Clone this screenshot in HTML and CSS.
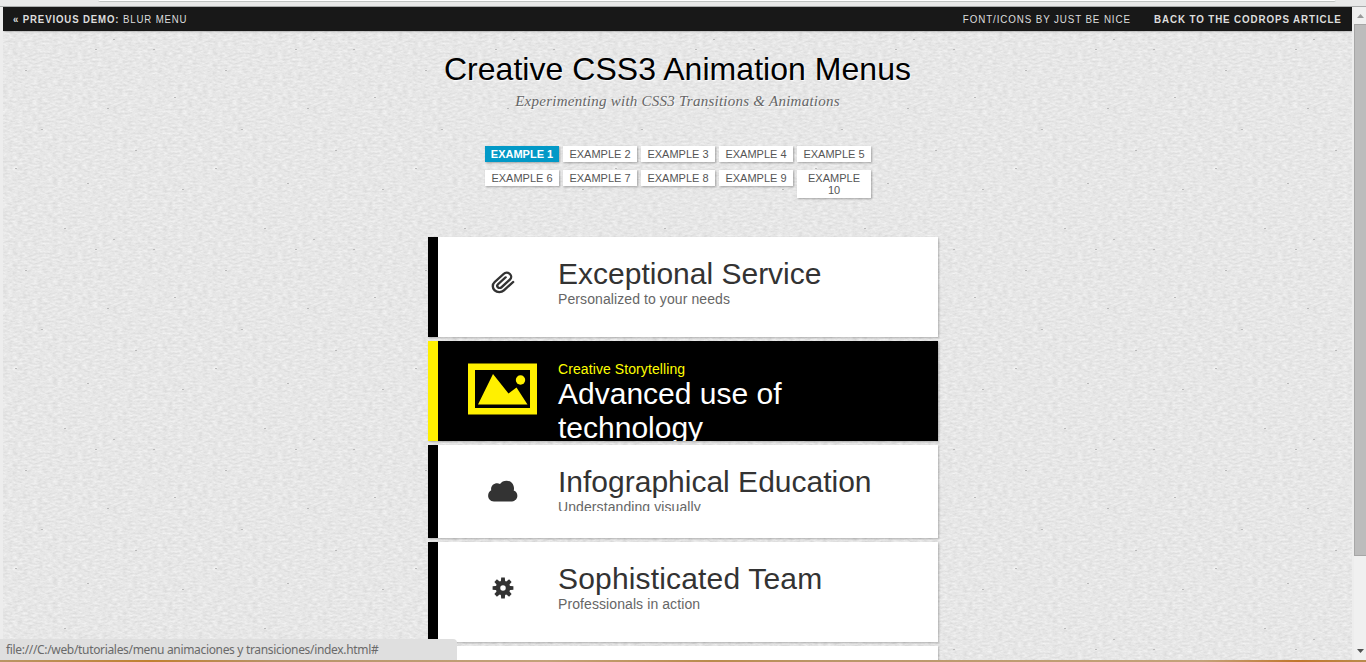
FILE: index.html
```html
<!DOCTYPE html>
<html lang="en">
<head>
<meta charset="utf-8">
<title>Creative CSS3 Animation Menus</title>
<link rel="stylesheet" href="styles.css">
</head>
<body>
<div class="chrome-top"><span class="chrome-field"></span></div>
<div class="window">
  <main class="page">
    <svg class="paper" width="1349" height="653" aria-hidden="true">
      <defs>
        <filter id="grain" x="0" y="0" width="200" height="200" filterUnits="userSpaceOnUse" color-interpolation-filters="sRGB">
          <feTurbulence type="fractalNoise" baseFrequency="0.2 0.5" numOctaves="3" seed="4" stitchTiles="stitch"/>
          <feColorMatrix values="0.14 0 0 0 0.834  0.14 0 0 0 0.834  0.14 0 0 0 0.834  0 0 0 0 1"/>
        </filter>
        <pattern id="tile" width="200" height="200" patternUnits="userSpaceOnUse">
          <rect width="200" height="200" fill="#e6e6e6" filter="url(#grain)"/>
          <g fill="#b9b9b9"><path d="M61 21h2v1h-2zM110 32h2v1h-2zM92 42h2v1h-2zM22 63h2v1h-2zM150 42h2v1h-2zM171 90h2v1h-2zM38 122h2v1h-2zM132 143h2v1h-2zM84 176h2v1h-2zM12 161h2v1h-2zM179 182h2v1h-2zM104 101h2v1h-2z"/></g>
        </pattern>
      </defs>
      <rect width="1349" height="653" fill="url(#tile)"/>
    </svg>
    <div class="content">
      <div class="topbar">
        <a class="demo"><strong>« Previous Demo: </strong>Blur Menu</a>
        <span class="right"><a class="fonts">Font/icons by Just Be Nice</a><a class="back"><strong>Back to the Codrops Article</strong></a></span>
      </div>
      <h1>Creative CSS3 Animation Menus</h1>
      <h2><span>Experimenting with CSS3 Transitions &amp; Animations</span></h2>
      <nav class="examples">
        <a class="current">Example 1</a><a>Example 2</a><a>Example 3</a><a>Example 4</a><a>Example 5</a>
        <a>Example 6</a><a>Example 7</a><a>Example 8</a><a>Example 9</a><a>Example 10</a>
      </nav>
      <ul class="menu">
        <li>
          <span class="icon"><svg width="26" height="26" viewBox="0 0 26 26"><g transform="translate(13 12.800) scale(1.140 1.040) rotate(45) translate(-13.100 -13.900)" fill="none" stroke="#333" stroke-width="2.100" stroke-linecap="round"><path d="M11 8.500v9.500a2.100 2.100 0 0 0 4.200 0V7.500a3.900 3.900 0 0 0-7.800 0V18.500a5.700 5.700 0 0 0 11.400 0V7"/></g></svg></span>
          <div class="text"><h3>Exceptional Service</h3><p>Personalized to your needs</p></div>
        </li>
        <li class="active">
          <span class="icon"><svg width="70" height="52" viewBox="0 0 70 52"><path fill="#fff000" fill-rule="evenodd" d="M0 .500h69v51H0zM7 7v38h55V7zM10 41.500L25 11 40.500 30.500l8-6 11 17z"/><circle cx="52.500" cy="17" r="4.700" fill="#fff000"/></svg></span>
          <div class="text"><p>Creative Storytelling</p><h3>Advanced use of technology</h3></div>
        </li>
        <li class="short">
          <span class="icon"><svg width="30" height="22" viewBox="0 0 30 22"><path fill="#333" d="M6 21.500C-1 21-1.500 13 3.200 10.300 2.200 5.300 7.500 1.800 12 4 15-.8 25-1 26 8c0 1.200 0 2-.3 2.500 5 1.500 5.300 10-1.700 11z"/></svg></span>
          <div class="text"><h3>Infographical Education</h3><p>Understanding visually</p></div>
        </li>
        <li>
          <span class="icon"><svg width="22" height="22" viewBox="-11 -11 22 22"><g fill="#333"><path d="M-2.300-5l.5-5.400h3.600L2.300-5zM-2.300 5l.5 5.400h3.600L2.300 5z"/><path d="M-2.300-5l.5-5.400h3.600L2.300-5zM-2.300 5l.5 5.400h3.600L2.300 5z" transform="rotate(45)"/><path d="M-2.300-5l.5-5.400h3.600L2.300-5zM-2.300 5l.5 5.400h3.600L2.300 5z" transform="rotate(90)"/><path d="M-2.300-5l.5-5.400h3.600L2.300-5zM-2.300 5l.5 5.400h3.600L2.300 5z" transform="rotate(135)"/></g><circle r="5" fill="#fff" stroke="#333" stroke-width="4.500"/></svg></span>
          <div class="text"><h3 class="team">Sophisticated Team</h3><p>Professionals in action</p></div>
        </li>
        <li></li>
      </ul>
    </div>
  </main>
  <aside class="scroll"><svg width="12" height="653"><rect width="12" height="653" fill="#f0f0f0"/><path d="M3 11l3.500-4L10 11z" fill="#999"/><rect x=".5" y="17.500" width="14" height="531" fill="#bcbcbc" stroke="#a6a6a6"/><path d="M3 642h7l-3.500 4z" fill="#505050"/></svg></aside>
</div>
<div class="desktop"></div>
<div class="status">file:///C:/web/tutoriales/menu animaciones y transiciones/index.html#</div>
</body>
</html>
```
FILE: styles.css
```css
* { box-sizing: border-box; margin: 0; padding: 0; }
body { width: 1366px; height: 662px; overflow: hidden; background: #ededed; font-family: "Liberation Sans", Arial, sans-serif; }
.chrome-top { height: 7px; padding-left: 98px; background: #e8e8e8; border-bottom: 1px solid #aaacac; }
.chrome-field { display: block; width: 1238px; height: 2px; background: #fff; border-bottom: 1px solid #bfc3c1; border-radius: 0 0 3px 3px; }
.window { display: flex; height: 653px; padding-left: 3px; }
.page { position: relative; width: 1349px; height: 653px; overflow: hidden; }
.paper { position: absolute; left: 0; top: 0; }
.content { position: relative; }
.scroll { margin-left: 2px; }
.scroll svg { display: block; }
.topbar { display: flex; justify-content: space-between; height: 24px; padding: 0 10px; background: #181818; box-shadow: 1px 0 2px rgba(0,0,0,.5); color: #ddd; font-size: 11px; line-height: 24px; letter-spacing: 1px; text-transform: uppercase; white-space: pre; }
/* condensed lettering */
.demo { transform: scaleX(.874); transform-origin: left; }
.right { transform: scaleX(.89); transform-origin: right; }
.fonts { margin-right: 26px; }
h1 { padding-top: 20px; font-size: 32px; font-weight: 400; line-height: 36px; text-align: center; color: #000; white-space: nowrap; letter-spacing: .04px; text-shadow: 1px 1px 1px rgba(255,255,255,.9); }
h2 { font: italic 400 15px/20px Georgia, "Liberation Serif", serif; letter-spacing: .25px; padding-top: 4px; text-align: center; color: #666; text-shadow: 1px 1px 1px rgba(255,255,255,.9); white-space: nowrap; }
.examples { display: grid; grid-template-columns: repeat(5, 74px); gap: 8px 4px; align-items: start; justify-content: center; padding: 35px 0 0 1px; }
.examples a { padding: 2px 5px; background: #fff; color: #555; font-size: 11px; line-height: 12px; text-align: center; text-transform: uppercase; box-shadow: 1px 1px 2px rgba(0,0,0,.3); }
.examples .current { background: #0299c7; color: #fff; font-weight: 700; padding: 2px 0; }
.menu { list-style: none; width: 510px; margin: 39px 0 0 425px; }
.menu li { display: flex; height: 100px; margin-bottom: 4px; border-left: 10px solid #000; background: #fff; box-shadow: 1px 1px 2px rgba(0,0,0,.25); overflow: hidden; }
.menu .short { height: 93px; }
.icon { display: flex; align-items: center; justify-content: center; flex: none; width: 70px; height: 92px; margin: 0 10px 0 30px; }
.icon svg { flex: none; }
.text { width: 350px; padding: 20px 0 0 10px; }
.text h3 { font-size: 30px; font-weight: 400; line-height: 34px; color: #333; }
.text .team { letter-spacing: .17px; }
.text p { font-size: 14px; line-height: 16px; letter-spacing: .09px; color: #666; }
.short .text { height: 66px; overflow: hidden; }
.active .icon { height: 96px; }
.menu .active { background: #000; border-color: #fff000; }
.active .text p { color: #ff0; }
.active .text h3 { color: #fff; }
.desktop { height: 2px; background: linear-gradient(90deg, #b99565, #c08030 11%, #b69368 20%, #c3a27a 40%, #b98b4c 52%, #b99668 60%, #c3a27a 88%, #c0762c 95%, #b98b4c); }
.status { position: absolute; left: 0; top: 639px; width: 457px; height: 21px; padding-left: 6px; background: #dfdfdf; border-radius: 0 4px 0 0; color: #6a6a6a; font: 12px/21px "Noto Sans", "Open Sans", sans-serif; letter-spacing: -.33px; white-space: nowrap; }
```
